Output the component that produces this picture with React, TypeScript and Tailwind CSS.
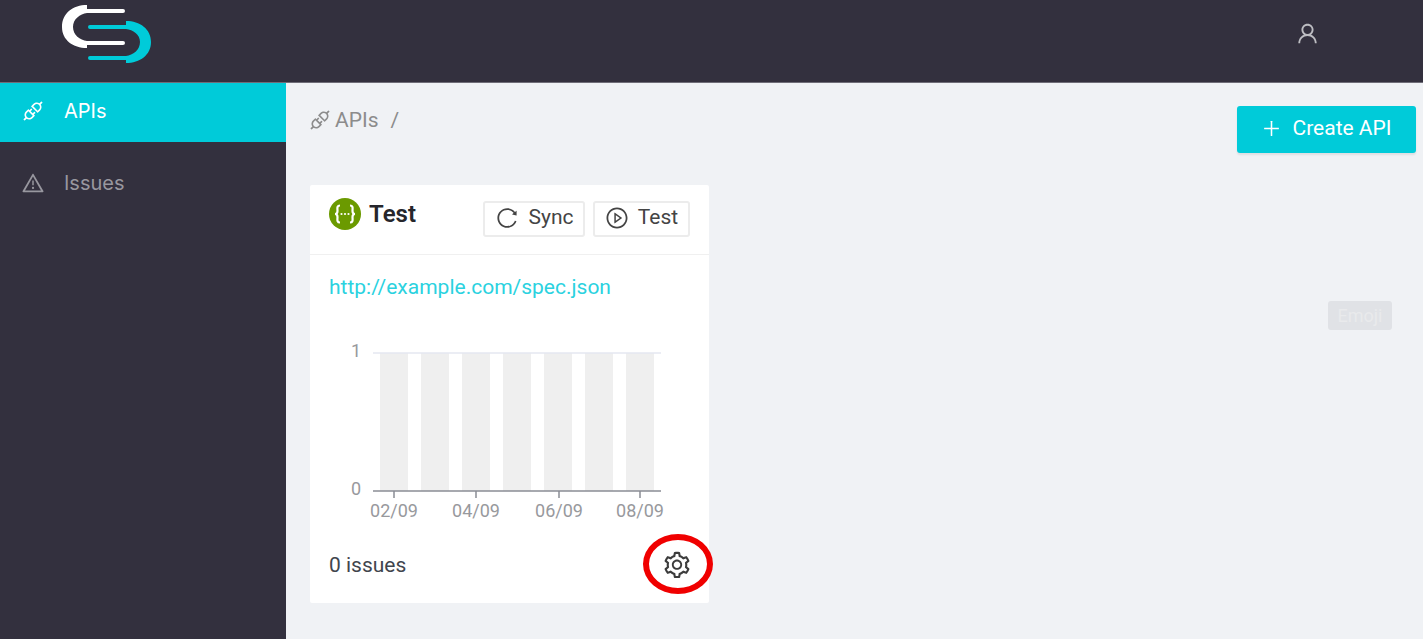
import {
  AiOutlineApi,
  AiOutlinePlayCircle,
  AiOutlinePlus,
  AiOutlineReload,
  AiOutlineSetting,
  AiOutlineUser,
  AiOutlineWarning,
} from 'react-icons/ai';

const Logo = () => (
  <svg width="92" height="60" viewBox="60 4 92 60" className="block">
    <path
      fill="#ffffff"
      d="M87 5C73 5 62 13 62 27C62 40 73 48 87 48V45H123a2 2 0 0 0 0-4H87C80 40 73 35 73 27C73 19 80 14 87 13H123a2 2 0 0 0 0-4H87Z"
    />
    <path
      fill="#00cbd9"
      d="M126 21C140 21 151 29 151 42C151 55 140 63 126 63V60H90a2 2 0 0 1 0-4H126C133 55 140 50 140 42C140 34 133 30 126 29H90a2 2 0 0 1 0-4H126Z"
    />
  </svg>
);

const SwaggerIcon = () => (
  <svg width="32" height="32" viewBox="0 0 32 32" className="block shrink-0">
    <circle cx="16" cy="16" r="16" fill="#6b9a00" />
    <path
      fill="none"
      stroke="#ffffff"
      strokeWidth="2.2"
      d="M11 7.5C7.5 7.5 8.5 11 8.5 13C8.5 15 7.5 16 6 16C7.5 16 8.5 17 8.5 19C8.5 21 7.5 24.5 11 24.5M21 7.5C24.5 7.5 23.5 11 23.5 13C23.5 15 24.5 16 26 16C24.5 16 23.5 17 23.5 19C23.5 21 24.5 24.5 21 24.5"
    />
    <circle cx="12.5" cy="16" r="1.1" fill="#ffffff" />
    <circle cx="16" cy="16" r="1.1" fill="#ffffff" />
    <circle cx="19.5" cy="16" r="1.1" fill="#ffffff" />
  </svg>
);

const barras = [380, 421, 462, 503, 544, 585, 626];
const fechas = [
  { x: 394, label: '02/09' },
  { x: 476, label: '04/09' },
  { x: 559, label: '06/09' },
  { x: 640, label: '08/09' },
];

// viewBox follows page coordinates so the chart numbers read straight off the design
const Chart = () => (
  <svg width="340" height="190" viewBox="340 335 340 190" className="block">
    {barras.map((x) => (
      <rect key={x} x={x} y={353} width={28} height={138} fill="#efefef" />
    ))}
    <line x1={373} x2={661} y1={353} y2={353} stroke="#e4e7f0" strokeWidth={1.5} />
    <line x1={373} x2={661} y1={491} y2={491} stroke="#8a8d94" strokeWidth={1.5} />
    {fechas.map((f) => (
      <g key={f.x}>
        <line x1={f.x} x2={f.x} y1={491} y2={498} stroke="#8a8d94" strokeWidth={1.5} />
        <text x={f.x} y={517} textAnchor="middle" fontSize={18} fill="#98999d">
          {f.label}
        </text>
      </g>
    ))}
    <text x={361} y={357} textAnchor="end" fontSize={18} fill="#98999d">
      1
    </text>
    <text x={361} y={495} textAnchor="end" fontSize={18} fill="#98999d">
      0
    </text>
  </svg>
);

const App = () => {
  return (
    <div className="relative flex h-[639px] w-[1423px] flex-col overflow-hidden font-['Roboto',sans-serif]">
      <header className="flex h-[82px] shrink-0 items-start justify-between bg-[#33303e]">
        <div className="pl-[60px] pt-[4px]">
          <Logo />
        </div>
        <div className="pr-[103px] pt-[21px]">
          <AiOutlineUser className="text-[25px] text-[#bdbdc2]" />
        </div>
      </header>

      <div className="flex min-h-0 flex-1 border-t border-t-[#6f6d78]">
        <aside className="w-[286px] shrink-0 bg-[#33303e] font-['Inter',sans-serif] text-[20px]">
          <div className="flex h-[59px] items-center gap-[19px] bg-[#00cbd9] pb-[3px] pl-[21px] text-white">
            <AiOutlineApi className="text-[24px]" />
            <span>APIs</span>
          </div>
          <div className="mt-[12px] flex h-[59px] items-center gap-[19px] pb-[2px] pl-[21px] text-[#98979f]">
            <AiOutlineWarning className="text-[24px]" />
            <span>Issues</span>
          </div>
        </aside>

        <main className="min-w-0 flex-1 bg-[#f0f2f5] pl-[24px] pr-[7px] pt-[23px]">
          <div className="flex items-start justify-between">
            <div className="flex items-center text-[21px] leading-[28px] text-[#8c8c8c]">
              <AiOutlineApi className="-ml-[2px] mr-[3px] text-[24px]" />
              <span>APIs</span>
              <span className="ml-[12px]">/</span>
            </div>
            <button className="flex h-[47px] w-[179px] items-center justify-center gap-[10px] rounded-[3px] bg-[#00cbd9] pb-[2px] text-[21px] text-white shadow-[0_2px_2px_rgba(0,0,0,0.08)]">
              <AiOutlinePlus className="text-[21px]" />
              <span>Create API</span>
            </button>
          </div>

          <section className="mt-[32px] h-[418px] w-[399px] rounded-[2px] bg-white">
            <div className="flex h-[70px] items-start justify-between border-b border-b-[#f0f0f0] pl-[19px] pr-[19px] pt-[13px]">
              <div className="flex items-center gap-[8px]">
                <SwaggerIcon />
                <span className="text-[24px] font-semibold leading-[32px] text-[#26262b]">Test</span>
              </div>
              <div className="flex gap-[8px] pt-[3px] text-[21px] text-[#444]">
                <button className="flex h-[36px] w-[102px] items-center justify-center gap-[10px] rounded-[3px] border-2 border-[#ececec] pb-[2px]">
                  <AiOutlineReload className="text-[24px]" />
                  <span>Sync</span>
                </button>
                <button className="flex h-[36px] w-[97px] items-center justify-center gap-[9px] rounded-[3px] border-2 border-[#ececec] pb-[2px]">
                  <AiOutlinePlayCircle className="text-[24px]" />
                  <span>Test</span>
                </button>
              </div>
            </div>

            <div className="pl-[19px] pt-[18px]">
              <a className="block text-[21px] leading-[28px] text-[#2bd2df]">http://example.com/spec.json</a>
            </div>

            <div className="pl-[30px] pt-[34px]">
              <Chart />
            </div>

            <div className="flex items-center justify-between pl-[19px] pr-[17px] pt-[23px]">
              <span className="pt-[2px] text-[21px] text-[#41454d]">0 issues</span>
              <AiOutlineSetting className="text-[30px] text-[#3c3c3c]" />
            </div>
          </section>
        </main>
      </div>

      {/* red ring drawn over the settings icon */}
      <div className="absolute left-[643px] top-[534px] h-[60px] w-[70px] rounded-[50%] border-[6px] border-[#f00000]" />

      <div className="absolute left-[1328px] top-[301px] flex h-[29px] w-[64px] items-center justify-center rounded-[3px] bg-[#e0e2e6] text-[18px] text-[#e9eaec]">
        Emoji
      </div>
    </div>
  );
};

export default App;
